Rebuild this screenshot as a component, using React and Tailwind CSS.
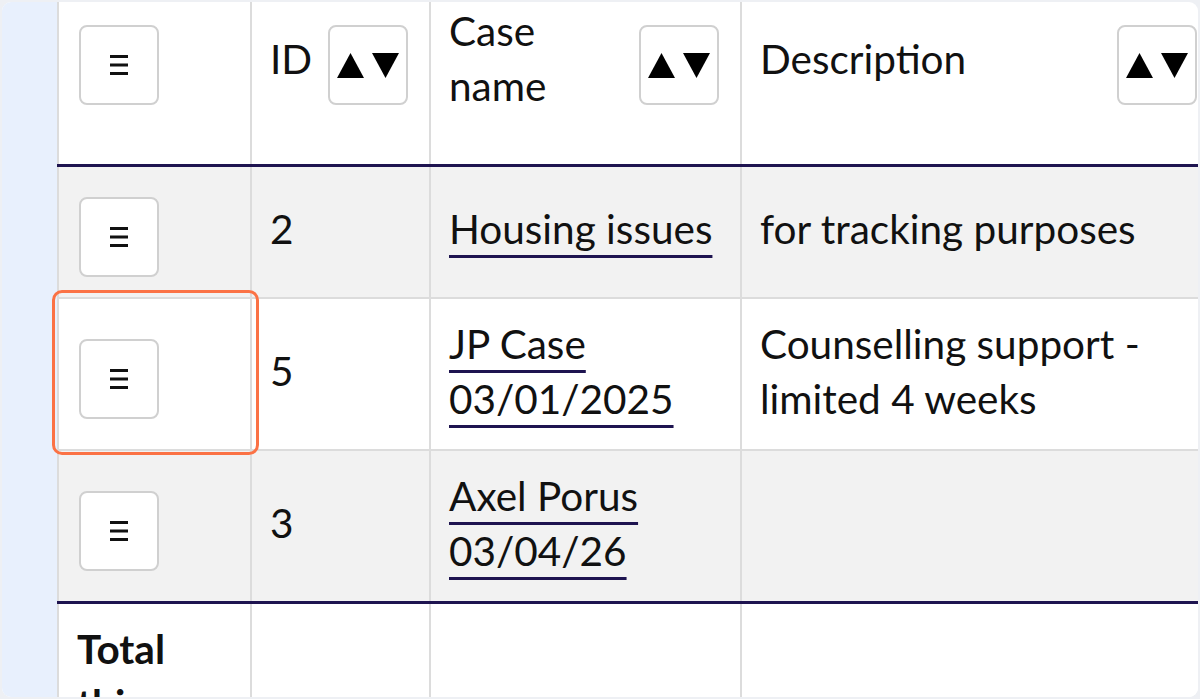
import React from 'react';

const rows = [
  { id: '2', name: 'Housing issues', desc: 'for tracking purposes', shade: true },
  { id: '5', name: 'JP Case 03/01/2025', desc: 'Counselling support - limited 4 weeks', shade: false },
  { id: '3', name: 'Axel Porus 03/04/26', desc: '', shade: true },
];

function MenuButton({ className = '' }) {
  return (
    <button className={`flex h-[80px] w-[80px] items-center justify-center rounded-[8px] border-2 border-[#d0d0d0] bg-white ${className}`}>
      <svg width="20" height="20" viewBox="0 0 20 20">
        <rect x="1" y="0" width="18" height="3" fill="#111" />
        <rect x="1" y="8.5" width="18" height="3" fill="#111" />
        <rect x="1" y="17" width="18" height="3" fill="#111" />
      </svg>
    </button>
  );
}

function SortButton() {
  return (
    <button className="flex h-[80px] w-[80px] shrink-0 items-center justify-center gap-[8px] rounded-[8px] border-2 border-[#d0d0d0] bg-white">
      <svg width="27" height="25" viewBox="0 0 27 25">
        <polygon points="13.5,0 27,25 0,25" fill="#000" />
      </svg>
      <svg width="27" height="25" viewBox="0 0 27 25">
        <polygon points="0,0 27,0 13.5,25" fill="#000" />
      </svg>
    </button>
  );
}

export default function App() {
  return (
    <div className="h-[699px] w-[1200px] bg-[#eef0f4] p-[2px] font-['Lato',sans-serif] text-[40.5px] leading-[55px] text-[#111]">
      <div className="relative flex h-full overflow-hidden rounded-[9px] bg-white">
        <div className="w-[55px] shrink-0 bg-[#e8f0fd]" />
        <table className="w-[1160px] shrink-0 table-fixed border-collapse self-start">
          <colgroup>
            <col className="w-[193px]" />
            <col className="w-[179px]" />
            <col className="w-[311px]" />
            <col className="w-[477px]" />
          </colgroup>
          <thead>
            <tr className="h-[163px] border-b-[3px] border-b-[#1e1450]">
              <th className="border-l-2 border-[#dcdcdc] px-[20px] pt-[23px] text-left align-top font-normal">
                <div className="flex h-[80px] items-center">
                  <MenuButton />
                </div>
              </th>
              <th className="border-l-2 border-[#dcdcdc] pl-[18px] pr-[21px] pt-[23px] text-left align-top font-normal">
                <div className="flex h-[80px] items-center justify-between">
                  <span className="pb-[14px]">ID</span>
                  <SortButton />
                </div>
              </th>
              <th className="border-l-2 border-[#dcdcdc] pl-[18px] pr-[21px] pt-[23px] text-left align-top font-normal">
                <div className="flex h-[80px] items-center justify-between">
                  <span className="pb-[14px]">Case<br />name</span>
                  <SortButton />
                </div>
              </th>
              <th className="border-l-2 border-[#dcdcdc] pl-[18px] pr-[21px] pt-[23px] text-left align-top font-normal">
                <div className="flex h-[80px] items-center justify-between">
                  <span className="pb-[14px]">Description</span>
                  <SortButton />
                </div>
              </th>
            </tr>
          </thead>
          <tbody>
            {rows.map((r, i) => (
              <tr
                key={r.id}
                className={`${r.shade ? 'bg-[#f2f2f2]' : 'bg-white'} ${i < rows.length - 1 ? 'border-b-2 border-b-[#dcdcdc]' : ''}`}
              >
                <td className="border-l-2 border-[#dcdcdc] p-[20px] align-middle">
                  <MenuButton className="mt-[10px]" />
                </td>
                <td className="border-l-2 border-[#dcdcdc] pb-[23px] pl-[18px] pr-[20px] pt-[17px] align-middle">{r.id}</td>
                <td className="border-l-2 border-[#dcdcdc] pb-[23px] pl-[18px] pr-[20px] pt-[17px] align-middle">
                  <a
                    href="#"
                    className="underline decoration-[#1e1450] decoration-[3px] underline-offset-[11px] [text-decoration-skip-ink:none]"
                  >
                    {r.name}
                  </a>
                </td>
                <td className="border-l-2 border-[#dcdcdc] pb-[23px] pl-[18px] pr-[20px] pt-[17px] align-middle">{r.desc}</td>
              </tr>
            ))}
          </tbody>
          <tfoot>
            <tr className="border-t-[3px] border-t-[#1e1450] bg-white">
              <td className="border-l-2 border-[#dcdcdc] pl-[18px] pr-[20px] pt-[17px] align-top font-bold">Total this page</td>
              <td className="border-l-2 border-[#dcdcdc]" />
              <td className="border-l-2 border-[#dcdcdc]" />
              <td className="border-l-2 border-[#dcdcdc]" />
            </tr>
          </tfoot>
        </table>
        <div className="pointer-events-none absolute left-[50px] top-[288px] h-[165px] w-[207px] rounded-[10px] border-[3px] border-[#fb7245]" />
      </div>
    </div>
  );
}
